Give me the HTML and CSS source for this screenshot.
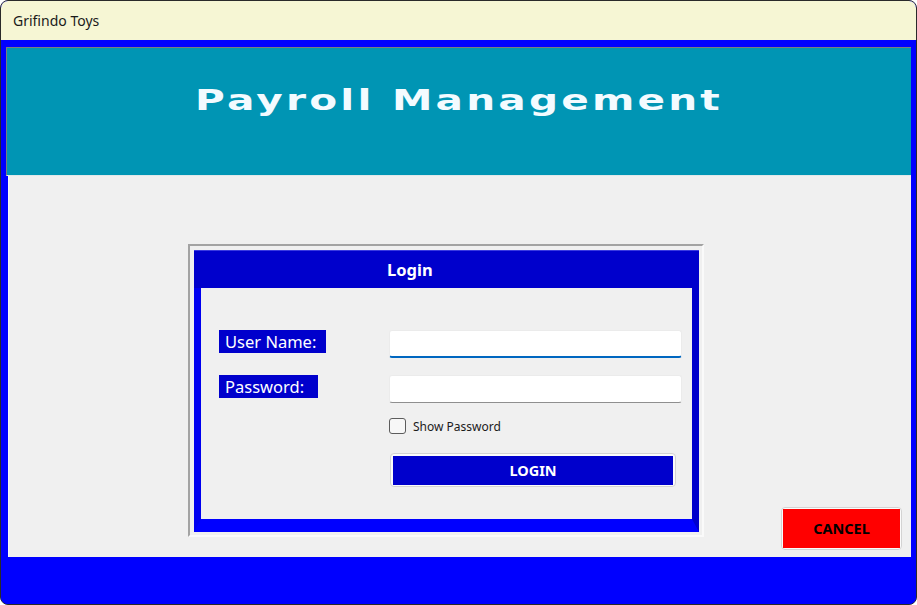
FILE: index.html
```html
<!DOCTYPE html>
<html>
<head>
<meta charset="utf-8">
<title>Grifindo Toys</title>
<link rel="stylesheet" href="styles.css">
</head>
<body>
<div class="window">
  <div class="titlebar">Grifindo Toys</div>
  <div class="client">
    <div class="banner"><span class="banner-title">Payroll Management</span></div>
    <div class="content">
      <div class="frame">
        <div class="login">
          <div class="login-head">Login</div>
          <div class="login-body">
            <div class="row row-user">
              <span class="label label-user">User Name:</span>
              <span class="input input-focus"></span>
            </div>
            <div class="row row-pass">
              <span class="label label-pass">Password:</span>
              <span class="input"></span>
            </div>
            <div class="row row-check">
              <span class="check"></span>
              <span class="check-text">Show Password</span>
            </div>
            <div class="row row-btn">
              <span class="btn-outer"><span class="btn btn-login">LOGIN</span></span>
            </div>
          </div>
        </div>
      </div>
      <span class="btn-outer cancel-outer"><span class="btn btn-cancel">CANCEL</span></span>
    </div>
  </div>
</div>
</body>
</html>
```

FILE: styles.css
```css
* { box-sizing: border-box; }
html, body { margin: 0; padding: 0; background: #ffffff; }
body { font-family: "Noto Sans", "Liberation Sans", sans-serif; }

.window {
  width: 917px;
  height: 605px;
  border: 1px solid #2a2a2a;
  border-radius: 8px;
  overflow: hidden;
  display: flex;
  flex-direction: column;
  background: #0000ff;
}

.titlebar {
  height: 39px;
  flex: none;
  background: #f6f6d4;
  color: #1a1a1a;
  font-size: 14px;
  display: flex;
  align-items: center;
  padding-left: 12px;
  padding-bottom: 1px;
}

.client {
  flex: 1;
  background: #0000ff;
  padding: 7px 5px 0 5px;
  display: flex;
  flex-direction: column;
}

.banner {
  height: 129px;
  flex: none;
  background: #0095b4;
  border-top: 1px solid #7d7d7d;
  border-left: 1px solid #7d7d7d;
  border-bottom: 1px solid #dfe8ea;
  padding: 35px 0 0 188px;
  overflow: hidden;
}

.banner-title {
  display: inline-block;
  font-family: "DejaVu Sans", "Verdana", sans-serif;
  font-weight: bold;
  font-size: 29px;
  line-height: 34px;
  letter-spacing: 2.3px;
  color: #f3fbff;
  transform: scaleX(1.4);
  transform-origin: left center;
  white-space: nowrap;
}

.content {
  height: 381px;
  flex: none;
  margin-left: 2px;
  background: #f0f0f0;
  border-left: 1px solid #f8f8f8;
  display: flex;
  align-items: flex-start;
}

.frame {
  margin: 68px 0 0 179px;
  width: 516px;
  height: 293px;
  border: 2px solid;
  border-color: #a3a3a3 #fafafa #fafafa #a3a3a3;
  padding: 4px 3px 3px 4px;
}

.login {
  width: 505px;
  height: 282px;
  display: flex;
  flex-direction: column;
}

.login-head {
  height: 38px;
  flex: none;
  background: #0000cc;
  border-top: 1px solid #3a3ae0;
  color: #ffffff;
  font-weight: bold;
  font-size: 16.5px;
  line-height: 37px;
  padding-left: 193px;
}

.login-body {
  flex: 1;
  background: #f0f0f0;
  border-left: 7px solid #0000f0;
  border-right: 7px solid #0000cc;
  border-bottom: 13px solid #0000ff;
  padding: 42px 0 0 18px;
  display: flex;
  flex-direction: column;
}

.row {
  display: flex;
  align-items: flex-start;
}
.row-pass { margin-top: 17px; }
.row-check { margin-top: 15px; margin-left: 170px; align-items: center; height: 16px; }
.row-btn { margin-top: 19px; margin-left: 171px; }

.label {
  height: 23px;
  background: #0000cc;
  color: #ffffff;
  font-size: 16.5px;
  line-height: 23px;
  padding-left: 6px;
  flex: none;
}
.label-user { width: 107px; margin-right: 63px; }
.label-pass { width: 99px; margin-right: 71px; }

.input {
  width: 293px;
  height: 28px;
  background: #ffffff;
  border: 1px solid #ebebeb;
  border-bottom: 1px solid #8f8f8f;
  border-radius: 3px;
}
.input-focus {
  border-bottom: 2px solid #0067c0;
}

.check {
  width: 17px;
  height: 16px;
  border: 1px solid #5c5c5c;
  border-radius: 3px;
  background: #f7f7f7;
  flex: none;
}
.check-text {
  margin-left: 7px;
  font-size: 12px;
  color: #1b1b1b;
  line-height: 16px;
  padding-top: 1px;
}

.btn-outer {
  display: inline-flex;
  background: #fbfbfb;
  border: 1px solid #d3d3d3;
  border-radius: 4px;
  padding: 2px 2px 1px 2px;
}
.btn {
  display: flex;
  align-items: center;
  justify-content: center;
  font-weight: bold;
  font-size: 14.5px;
  padding-bottom: 2px;
}
.btn-login {
  width: 280px;
  height: 29px;
  background: #0000cc;
  color: #ffffff;
}

.cancel-outer {
  margin: 0 9px 7px auto;
  align-self: flex-end;
  padding: 1px;
}
.btn-cancel {
  width: 117px;
  height: 39px;
  background: #ff0000;
  color: #000000;
  font-size: 14.5px;
}
```
